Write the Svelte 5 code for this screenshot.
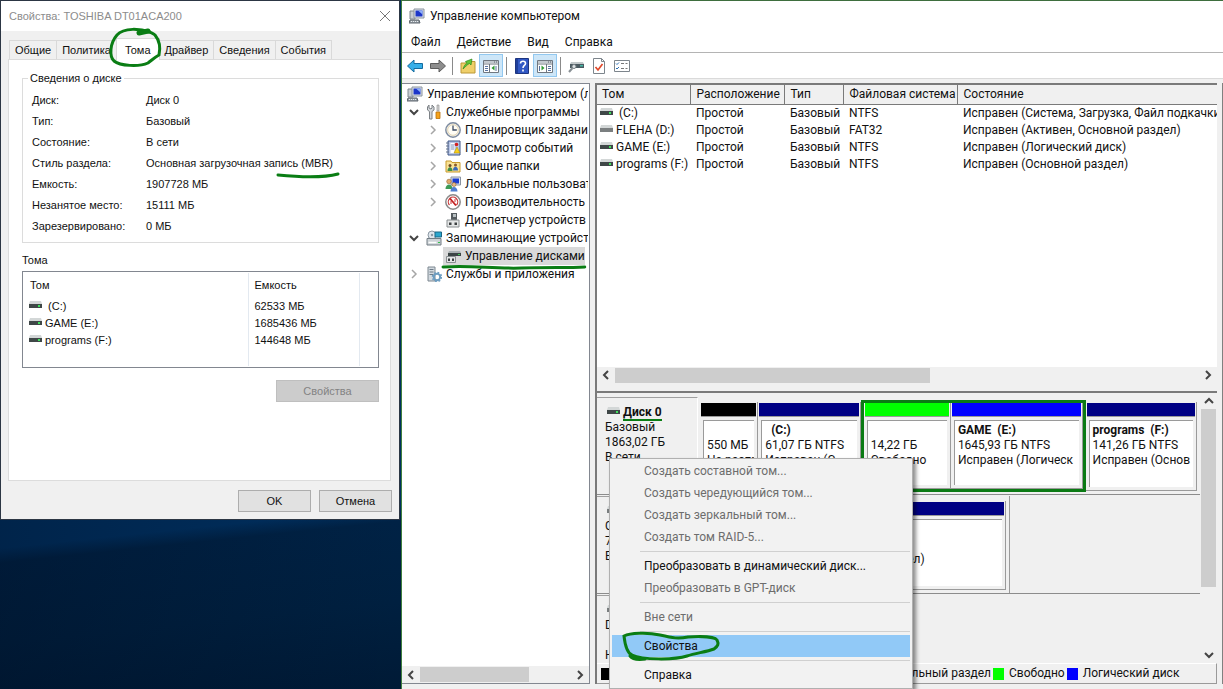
<script>
	let tabs = ['Общие', 'Политика', 'Тома', 'Драйвер', 'Сведения', 'События'];
	let activeTab = $state('Тома');

	let diskInfo = [
		['Диск:', 'Диск 0'],
		['Тип:', 'Базовый'],
		['Состояние:', 'В сети'],
		['Стиль раздела:', 'Основная загрузочная запись', '(MBR)'],
		['Емкость:', '1907728 МБ'],
		['Незанятое место:', '15111 МБ'],
		['Зарезервировано:', '0 МБ']
	];

	let diskVolumes = [
		{ name: '\u00a0(C:)', size: '62533 МБ' },
		{ name: 'GAME (E:)', size: '1685436 МБ' },
		{ name: 'programs (F:)', size: '144648 МБ' }
	];

	let menus = ['Файл', 'Действие', 'Вид', 'Справка'];

	let tree = [
		{
			label: 'Служебные программы',
			icon: 'tools',
			open: true,
			children: [
				{ label: 'Планировщик заданий', icon: 'clock', open: false },
				{ label: 'Просмотр событий', icon: 'events', open: false },
				{ label: 'Общие папки', icon: 'shared', open: false },
				{ label: 'Локальные пользователи', icon: 'users', open: false },
				{ label: 'Производительность', icon: 'gauge', open: false },
				{ label: 'Диспетчер устройств', icon: 'devices' }
			]
		},
		{
			label: 'Запоминающие устройства',
			icon: 'storage',
			open: true,
			children: [{ label: 'Управление дисками', icon: 'disks', selected: true }]
		},
		{ label: 'Службы и приложения', icon: 'services', open: false }
	];

	let volumes = [
		{ name: '\u00a0(C:)', fs: 'NTFS', status: 'Исправен (Система, Загрузка, Файл подкачки)' },
		{ name: 'FLEHA (D:)', fs: 'FAT32', status: 'Исправен (Активен, Основной раздел)', removable: true },
		{ name: 'GAME (E:)', fs: 'NTFS', status: 'Исправен (Логический диск)' },
		{ name: 'programs (F:)', fs: 'NTFS', status: 'Исправен (Основной раздел)' }
	];

	let legend = [
		{ label: 'Не распределена', kind: 'black' },
		{ label: 'Основной раздел', kind: 'navy' },
		{ label: 'Дополнительный раздел', kind: 'green' },
		{ label: 'Свободно', kind: 'lime' },
		{ label: 'Логический диск', kind: 'blue' }
	];

	let contextMenu = [
		[
			{ label: 'Создать составной том...', disabled: true },
			{ label: 'Создать чередующийся том...', disabled: true },
			{ label: 'Создать зеркальный том...', disabled: true },
			{ label: 'Создать том RAID-5...', disabled: true }
		],
		[
			{ label: 'Преобразовать в динамический диск...' },
			{ label: 'Преобразовать в GPT-диск', disabled: true }
		],
		[{ label: 'Вне сети', disabled: true }],
		[{ label: 'Свойства', current: true }],
		[{ label: 'Справка' }]
	];
</script>

{#snippet icon(name)}
	<svg class="icon" viewBox="0 0 16 16" aria-hidden="true">
		{#if name === 'computer'}
			<path d="M1 3h5v8H1z" fill="#c9ced3" stroke="#7d868e" />
			<path d="M5 1h10v9H5z" fill="#dfe3e8" stroke="#8a949e" />
			<path d="M6.500 2.500h7v6h-7z" fill="#1c36c9" />
			<path d="M9 2.500h4.500v4z" fill="#8fb0f7" />
			<path d="M1 12h9l1 3H0z" fill="#9aa2a9" stroke="#5f676e" />
			<path d="M2 13.500h7" stroke="#e8ecef" stroke-dasharray="1 1" />
		{:else if name === 'tools'}
			<path d="M3 1v3l2 1 1-1V1l2 2v3L6 7.500V15H3.500V7.500L1.500 6V3z" fill="#d5d8db" stroke="#7c8186" />
			<path d="M11 1h2v6h-2z" fill="#d6d6d6" stroke="#888" stroke-width=".6" />
			<path d="M10 8h4v6.500h-4z" fill="#f6a21a" stroke="#b8700a" stroke-width=".8" />
		{:else if name === 'clock'}
			<circle cx="8" cy="8" r="7.200" fill="#f3efe6" stroke="#7d8ba0" stroke-width="1.400" />
			<circle cx="8" cy="8" r="5.300" fill="#fffdf5" stroke="#d8c9a0" stroke-width=".7" />
			<path d="M8 3.500V8h3.800" fill="none" stroke="#3b4a63" stroke-width="1.300" />
		{:else if name === 'events'}
			<path d="M3 1h12v14H3z" fill="#b9c7e6" stroke="#3d5487" />
			<path d="M5.500 3h4v10h-4z" fill="#fff" />
			<path d="M6 5h3M6 7h3M6 9h3" stroke="#7a90bb" />
			<circle cx="11.500" cy="4.500" r="1.800" fill="#d32020" />
			<path d="M9 13l3-6 3 6z" fill="#f7d11b" stroke="#a98300" stroke-width=".5" />
			<path d="M1 3h3M1 6h3M1 9h3M1 12h3" stroke="#66748d" />
		{:else if name === 'shared'}
			<path d="M1 3h5l1 1.500h8V14H1z" fill="#f9e296" stroke="#c79a2c" />
			<circle cx="5" cy="7.500" r="1.500" fill="#6f4a24" />
			<path d="M2.500 13c0-5 5-5 5 0z" fill="#3f8f4a" />
			<circle cx="10.500" cy="7" r="1.500" fill="#8a5a2a" />
			<path d="M8 12.500c0-5 5-5 5 0z" fill="#3a69b8" />
		{:else if name === 'users'}
			<path d="M6 1h9.500v8H6z" fill="#dde3ea" stroke="#8993a0" />
			<path d="M7.500 2.500h6.500v5H7.500z" fill="#1b3dd1" />
			<circle cx="4" cy="5.500" r="2.300" fill="#e3ab6c" stroke="#94622d" stroke-width=".6" />
			<path d="M.5 13c0-6 7-6 7 0z" fill="#3f9b57" />
			<circle cx="9" cy="8.500" r="2" fill="#e9b983" stroke="#94622d" stroke-width=".6" />
			<path d="M5.500 15.500c0-6 7-6 7 0z" fill="#4e7ed0" />
		{:else if name === 'gauge'}
			<circle cx="8" cy="8" r="7.200" fill="#fff" stroke="#8a8a8a" stroke-width="1.500" />
			<path d="M4.500 11a4.700 4.700 0 1 1 7 0" fill="none" stroke="#c93a3a" stroke-width="1.200" />
			<path d="M5 4.500l6 7" stroke="#c41f1f" stroke-width="1.800" />
			<path d="M6 7v3M10 5v3" stroke="#c93a3a" />
		{:else if name === 'devices'}
			<path d="M6 1h6v7H6z" fill="#555c60" />
			<path d="M8 2h3v3H8z" fill="#b9c1c4" />
			<path d="M2 8h12v7H2z" fill="#e4e6e6" stroke="#898e90" />
			<path d="M4 10.500h2.500V13H4zM9.500 10.500H12V13H9.500z" fill="#3c4042" />
		{:else if name === 'storage'}
			<circle cx="6" cy="5" r="4" fill="#dfe6ec" stroke="#8b98a3" />
			<circle cx="6" cy="5" r="1.200" fill="#8b98a3" />
			<path d="M9 2h6.500v5H9z" fill="#2ba6cd" stroke="#1b6785" />
			<path d="M1 8.500h14V15H1z" fill="#cdd3d7" stroke="#737d84" />
			<path d="M2.500 12.500h8" stroke="#fff" stroke-width="1.500" />
			<path d="M12 12h2v1h-2z" fill="#35c24c" />
		{:else if name === 'disks'}
			<path d="M4 3h11l1 2H3z" fill="#a9b0b2" />
			<path d="M3 5h13v3H3z" fill="#3c4545" />
			<path d="M13 6h2v1h-2z" fill="#42d05a" />
			<path d="M1.500 8.500h9v6h-9z" fill="#e4e6e6" stroke="#898e90" />
			<path d="M3 10.500h2V13H3zM7 10.500h2V13H7z" fill="#3c4042" />
		{:else if name === 'services'}
			<path d="M2 1h7v14H2z" fill="#d3dae0" stroke="#7c8790" />
			<path d="M3.500 3.500h4M3.500 6h4M3.500 8.500h4" stroke="#6c7a87" />
			<circle cx="11" cy="11" r="3.200" fill="none" stroke="#6c9cc0" stroke-width="2" />
			<circle cx="11" cy="11" r="4.600" fill="none" stroke="#6c9cc0" stroke-width="1.400" stroke-dasharray="1.800 1.800" />
		{:else if name === 'back'}
			<path d="M.5 8L7 2v3.500h8.500v5H7V14z" fill="#35aee8" stroke="#146b9e" />
		{:else if name === 'forward'}
			<path d="M15.500 8L9 2v3.500H.5v5H9V14z" fill="#8d8d8d" stroke="#5c5c5c" />
		{:else if name === 'folder'}
			<path d="M1 5h5l1-1.500h8V15H1z" fill="#efcf6a" stroke="#bb9836" />
			<path d="M3 11c1-3 2-5 4-5.500L5.500 3.500 12 1l-1 6-1.500-1.500C7 6.500 6 8.500 3 11z" fill="#5fc43a" stroke="#2f8a1c" stroke-width=".7" />
		{:else if name === 'panel' || name === 'actions'}
			<path d="M.5 2.500h15v12H.5z" fill="#fff" stroke="#6f7780" />
			<path d="M1 3h14v2H1z" fill="#c3c9cf" />
			<path d="M11 4h1M13 4h1" stroke="#56606a" />
			<path d="M1 6h14" stroke="#6f7780" />
			{#if name === 'panel'}
				<path d="M6.500 6v8" stroke="#6f7780" />
				<path d="M2 8.500h3M2 10.500h3M2 12.500h3M13 8v5" stroke="#5873a1" />
				<path d="M11.500 7.500v5L8.500 10z" fill="#2e9a32" />
			{:else}
				<path d="M9.500 6v8" stroke="#6f7780" />
				<path d="M11 8.500h3M11 10.500h3M11 12.500h3M2.500 8v5" stroke="#5873a1" />
				<path d="M4.500 7.500v5l3-2.500z" fill="#2e9a32" />
			{/if}
		{:else if name === 'help'}
			<path d="M1.500.5h13v15h-13z" fill="#3158c4" stroke="#1d3580" />
			<path d="M2 1h2v14H2z" fill="#1f3f9b" />
			<path d="M6.500 5.500c0-3 5-3 5 0 0 2-2.500 2-2.500 4.500M9 11.500v2" fill="none" stroke="#fff" stroke-width="1.600" />
		{:else if name === 'connect'}
			<path d="M3 4h12l1 2H2z" fill="#c2c8ca" />
			<path d="M2 6h14v4H2z" fill="#4b5a61" />
			<path d="M12 7h3v1.500h-3z" fill="#46b9a5" />
			<circle cx="6" cy="8.500" r="2" fill="#dfe4e6" stroke="#777f84" />
			<path d="M4.500 10l-3.500 4" stroke="#888f94" stroke-width="2" />
		{:else if name === 'check'}
			<path d="M2.500.5h8l3 3v12h-11z" fill="#fff" stroke="#7d858c" />
			<path d="M10.500.5v3h3" fill="none" stroke="#7d858c" />
			<path d="M4.500 9l2.500 3 4.500-6" fill="none" stroke="#e0482a" stroke-width="1.700" />
		{:else if name === 'list'}
			<path d="M.5 2.500h15v11H.5z" fill="#fff" stroke="#7d858c" />
			<path d="M2 5.500l1 1L5 4.500M2 10l1 1 2-2" fill="none" stroke="#2b6fb5" />
			<path d="M7 5.500h3M11.500 5.500h2M7 10.500h3M11.500 10.500h2" stroke="#777" />
		{/if}
	</svg>
{/snippet}

{#snippet drive(removable = false)}
	<svg class="drive" viewBox="0 0 13 8" aria-hidden="true">
		<path d="M1 0h11l1 3H0z" fill="#d3d7d7" />
		<path d="M0 3h13v4H0z" fill={removable ? '#7b7f80' : '#3f4747'} />
		{#if !removable}
			<path d="M9 4h2v2H9z" fill="#3fe05c" />
		{/if}
	</svg>
{/snippet}

{#snippet chevron(dir)}
	<svg class="chevron {dir}" viewBox="0 0 10 10" aria-hidden="true">
		<path d="M3 1l4 4-4 4" />
	</svg>
{/snippet}

{#snippet branch(nodes)}
	<ul>
		{#each nodes as node}
			<li>
				<div class="node">
					<span class="toggle" class:collapsed={!node.open}>
						{#if node.open !== undefined}
							{@render chevron(node.open ? 'down' : 'right')}
						{/if}
					</span>
					<button class="node-label" class:selected={node.selected}>
						{@render icon(node.icon)}{node.label}
						{#if node.selected}
							<svg class="mark under-node" viewBox="0 0 144 6" preserveAspectRatio="none" aria-hidden="true">
								<path d="M0 3c30-2 50 2 80 1s45 0 64-1" />
							</svg>
						{/if}
					</button>
				</div>
				{#if node.children && node.open}
					{@render branch(node.children)}
				{/if}
			</li>
		{/each}
	</ul>
{/snippet}

{#snippet partition(kind, size, title, lines)}
	<div class="partition {size}">
		<div class="stripe {kind}"></div>
		<div class="partition-body">
			<strong>{title}</strong>
			{#each lines as line}
				<span>{line}</span>
			{/each}
		</div>
	</div>
{/snippet}

<div class="desktop">
	<div class="left-side">
		<section class="dialog">
			<header class="dialog-title">
				<span>Свойства: TOSHIBA DT01ACA200</span>
				<button class="close" aria-label="Закрыть">
					<svg viewBox="0 0 10 10"><path d="M0 0l10 10M10 0L0 10" /></svg>
				</button>
			</header>
			<div class="tabs" role="tablist">
				{#each tabs as tab}
					<button
						class="tab"
						class:active={tab === activeTab}
						role="tab"
						aria-selected={tab === activeTab}
						onclick={() => (activeTab = tab)}
					>
						{tab}
						{#if tab === 'Тома'}
							<svg class="mark ring" viewBox="0 0 52 40" aria-hidden="true">
								<path d="M41 4C32 1 15-1 8 7 1 15 0 28 5 33c6 5 25 6 34 2 4-3 7-6 11-8 2-9 0-15-4-20-3-3-7-4-13-3" />
								<path d="M30 5l9-2" stroke-width="5" />
							</svg>
						{/if}
					</button>
				{/each}
			</div>
			<div class="tab-panel">
				<fieldset>
					<legend>Сведения о диске</legend>
					<dl>
						{#each diskInfo as [label, value, marked]}
							<dt>{label}</dt>
							<dd>
								{value}
								{#if marked}
									<span class="marked">
										{marked}
										<svg class="mark under-mbr" viewBox="0 0 62 6" aria-hidden="true">
											<path d="M1 3c20 2 45 3 60-1" />
										</svg>
									</span>
								{/if}
							</dd>
						{/each}
					</dl>
				</fieldset>
				<h2>Тома</h2>
				<div class="volume-list">
					<table>
						<thead>
							<tr><th>Том</th><th>Емкость</th><th class="rest" aria-label="Пусто"></th></tr>
						</thead>
						<tbody>
							{#each diskVolumes as volume}
								<tr>
									<td>{@render drive()}{volume.name}</td>
									<td>{volume.size}</td>
									<td></td>
								</tr>
							{/each}
							<tr class="filler"><td></td><td></td><td></td></tr>
						</tbody>
					</table>
				</div>
				<button class="push wide" disabled>Свойства</button>
			</div>
			<footer>
				<button class="push">OK</button>
				<button class="push">Отмена</button>
			</footer>
		</section>
	</div>

	<section class="console">
		<header class="console-title">
			{@render icon('computer')}
			<span>Управление компьютером</span>
		</header>
		<nav class="menubar">
			{#each menus as item}
				<button>{item}</button>
			{/each}
		</nav>
		<div class="toolbar">
			<button aria-label="Назад">{@render icon('back')}</button>
			<button aria-label="Вперед">{@render icon('forward')}</button>
			<i></i>
			<button aria-label="Вверх">{@render icon('folder')}</button>
			<button aria-label="Дерево консоли" class="on">{@render icon('panel')}</button>
			<i></i>
			<button aria-label="Справка">{@render icon('help')}</button>
			<button aria-label="Панель действий" class="on">{@render icon('actions')}</button>
			<i></i>
			<button aria-label="Подключить">{@render icon('connect')}</button>
			<button aria-label="Проверить">{@render icon('check')}</button>
			<button aria-label="Параметры">{@render icon('list')}</button>
		</div>

		<div class="workspace">
			<aside class="tree">
				<div class="tree-body">
					<button class="node-label root">{@render icon('computer')}Управление компьютером (локальным)</button>
					{@render branch(tree)}
				</div>
				<div class="hscroll">
					<button aria-label="Влево">{@render chevron('left')}</button>
					<div class="track"><div class="thumb tree-thumb"></div></div>
					<button aria-label="Вправо">{@render chevron('right')}</button>
				</div>
			</aside>

			<main>
				<div class="volumes">
					<div class="volumes-body">
						<table>
							<thead>
								<tr>
									<th>Том</th>
									<th>Расположение</th>
									<th>Тип</th>
									<th>Файловая система</th>
									<th>Состояние</th>
								</tr>
							</thead>
							<tbody>
								{#each volumes as volume}
									<tr>
										<td>{@render drive(volume.removable)}{volume.name}</td>
										<td>Простой</td>
										<td>Базовый</td>
										<td>{volume.fs}</td>
										<td>{volume.status}</td>
									</tr>
								{/each}
							</tbody>
						</table>
					</div>
					<div class="hscroll">
						<button aria-label="Влево">{@render chevron('left')}</button>
						<div class="track"><div class="thumb"></div></div>
						<button aria-label="Вправо">{@render chevron('right')}</button>
					</div>
				</div>

				<div class="graph">
					<div class="disk-view">
						<div class="disks">
							<div class="disk">
								<div class="disk-label">
									<strong>{@render drive()}<span class="marked">Диск 0</span></strong>
									<span>Базовый</span>
									<span>1863,02 ГБ</span>
									<span>В сети</span>
								</div>
								<div class="partitions">
									{@render partition('black', 'tiny', '', ['550 МБ', 'Не распр'])}
									{@render partition('navy', 'small', '\u00a0 (C:)', ['61,07 ГБ NTFS', 'Исправен (С'])}
									<div class="extended">
										{@render partition('lime', 'free', '', ['14,22 ГБ', 'Свободно'])}
										{@render partition('blue', 'large', 'GAME \u00a0(E:)', ['1645,93 ГБ NTFS', 'Исправен (Логическ'])}
									</div>
									{@render partition('navy', 'medium', 'programs \u00a0(F:)', ['141,26 ГБ NTFS', 'Исправен (Основ'])}
								</div>
							</div>
							<div class="disk second">
								<div class="disk-label">
									<strong>{@render drive(true)}<span>Диск 1</span></strong>
									<span>Съемное</span>
									<span>7,45 ГБ</span>
									<span>В сети</span>
								</div>
								<div class="partitions">
									{@render partition('navy', 'flash', 'FLEHA \u00a0(D:)', ['7,45 ГБ FAT32', 'Исправен (Активен, Основной раздел)'])}
								</div>
							</div>
							<div class="disk">
								<div class="disk-label">
									<strong>{@render drive(true)}<span>CD-ROM 0</span></strong>
									<span>DVD (G:)</span>
									<span>&nbsp;</span>
									<span>Нет носителя</span>
								</div>
							</div>
						</div>
						<div class="vscroll">
							<button aria-label="Вверх">{@render chevron('up')}</button>
							<div class="track"><div class="thumb"></div></div>
							<button aria-label="Вниз">{@render chevron('down')}</button>
						</div>
					</div>
					<ul class="legend">
						{#each legend as item}
							<li><span class="swatch {item.kind}"></span>{item.label}</li>
						{/each}
					</ul>

					<div class="context-menu" role="menu">
						{#each contextMenu as group}
							<div class="group">
								{#each group as item}
									<button role="menuitem" class:current={item.current} disabled={item.disabled}>
										{item.label}
										{#if item.current}
											<svg class="mark loop" viewBox="0 0 100 32" aria-hidden="true">
												<path d="M2 5C8 2 25 1 38 4s18 4 28 2c14-1 27 0 29 3 2 4 1 6-3 9-8 3-18 4-27 7-12 4-45 4-55-1C5 22 3 14 2 5zM8 25c3 4 8 4 15 3" />
											</svg>
										{/if}
									</button>
								{/each}
							</div>
						{/each}
					</div>
				</div>
			</main>
			<div class="edge"></div>
		</div>
	</section>
</div>

<style>
	:global(body) {
		margin: 0;
	}
	* {
		box-sizing: border-box;
	}
	button {
		font: inherit;
		color: inherit;
		background: none;
		border: none;
		padding: 0;
		margin: 0;
	}
	ul,
	dl,
	dd,
	h2 {
		list-style: none;
		margin: 0;
		padding: 0;
		font-weight: normal;
	}
	table {
		border-collapse: collapse;
		table-layout: fixed;
	}
	th,
	td {
		padding: 0;
		text-align: left;
		font-weight: normal;
		white-space: nowrap;
	}

	.desktop {
		display: grid;
		grid-template-columns: minmax(0, 401fr) minmax(0, 822fr);
		height: 100vh;
		overflow: hidden;
		color: #111;
		font-family: Roboto, 'Open Sans', sans-serif;
		font-size: 12px;
		line-height: 16px;
	}
	.left-side {
		background:
			linear-gradient(to right, rgba(0, 8, 24, 0.3), rgba(0, 8, 24, 0)),
			linear-gradient(174deg, #003060 75%, #002245 77%, #002040 88%, #001a36 100%);
	}
	.icon {
		width: 16px;
		height: 16px;
		flex: none;
	}
	.drive {
		width: 13px;
		height: 8px;
		flex: none;
		margin-right: 3px;
		vertical-align: 1px;
	}
	.chevron {
		width: 10px;
		height: 10px;
		fill: none;
		stroke: #444;
		stroke-width: 2;
	}
	.chevron.left {
		transform: rotate(180deg);
	}
	.chevron.down {
		transform: rotate(90deg);
	}
	.chevron.up {
		transform: rotate(-90deg);
	}

	/* hand-drawn green marks */
	.mark {
		position: absolute;
		fill: none;
		stroke: #0a7d14;
		stroke-width: 3;
		stroke-linecap: round;
		overflow: visible;
		pointer-events: none;
	}
	.marked {
		position: relative;
	}
	.ring {
		width: 52px;
		height: 40px;
		left: -8px;
		top: -11px;
		z-index: 2;
	}
	.under-mbr {
		width: 62px;
		height: 6px;
		right: -6px;
		top: 15px;
	}
	.under-node {
		left: 0;
		width: 100%;
		height: 6px;
		bottom: -5px;
		z-index: 1;
	}
	.loop {
		width: 100px;
		height: 32px;
		left: 10px;
		top: -4px;
	}

	/* properties dialog */
	.dialog {
		margin-right: 1px;
		border: 1px solid #2c3644;
		background: #f0f0f0;
		font-family: 'Liberation Sans', Arial, sans-serif;
		font-size: 11px;
	}
	.dialog-title {
		display: flex;
		justify-content: space-between;
		align-items: center;
		height: 30px;
		padding: 0 9px 0 8px;
		background: #fff;
		color: #8c8c8c;
	}
	.close svg {
		display: block;
		width: 10px;
		height: 10px;
		fill: none;
		stroke: #777;
		overflow: visible;
	}
	.tabs {
		display: flex;
		align-items: flex-end;
		height: 28px;
		padding-left: 8px;
	}
	.tab {
		position: relative;
		height: 19px;
		padding: 0 5px;
		border: 1px solid #d9d9d9;
		border-bottom: none;
		margin-right: -1px;
	}
	.tab.active {
		height: 22px;
		margin-bottom: -1px;
		padding: 0 8px;
		background: #fff;
		z-index: 1;
	}
	.tab-panel {
		margin: 0 8px 0 7px;
		padding: 11px 11px 78px 13px;
		border: 1px solid #dcdcdc;
		background: #fff;
	}
	fieldset {
		margin: 0;
		padding: 5px 9px;
		border: 1px solid #dcdcdc;
		min-width: 0;
	}
	.tab-panel legend {
		padding: 0 2px;
		line-height: 14px;
		margin-left: -4px;
	}
	dl {
		display: grid;
		grid-template-columns: 114px 1fr;
		line-height: 21px;
	}
	h2 {
		margin: 9px 0 3px;
		font-size: 11px;
		line-height: 16px;
	}
	.volume-list {
		border: 1px solid #828790;
		padding: 1px 0;
	}
	.volume-list table {
		width: 100%;
	}
	.volume-list th,
	.volume-list td {
		height: 17px;
		padding-left: 6px;
		border-right: 1px solid #e3e9f0;
	}
	.volume-list th {
		height: 24px;
	}
	.volume-list th:first-child {
		width: 225px;
		padding-left: 7px;
	}
	.volume-list .rest {
		width: 19px;
	}
	.volume-list tr > :last-child {
		border-right: none;
	}
	.volume-list .filler td {
		height: 18px;
	}
	.push {
		width: 73px;
		height: 22px;
		border: 1px solid #adadad;
		background: #e1e1e1;
	}
	.push.wide {
		display: block;
		width: 103px;
		margin: 12px 0 0 auto;
	}
	.push:disabled {
		background: #ccc;
		border-color: #bfbfbf;
		color: #838383;
	}
	footer {
		display: flex;
		justify-content: flex-end;
		gap: 8px;
		padding: 9px 7px 7px;
	}

	/* management console */
	.console {
		display: flex;
		flex-direction: column;
		min-height: 0;
		border-top: 1px solid #3e6e3e;
		border-left: 1px solid #3e7e3e;
		background: #f0f0f0;
	}
	.console-title {
		display: flex;
		align-items: center;
		gap: 5px;
		height: 30px;
		padding-left: 7px;
		background: #fff;
	}
	.menubar {
		display: flex;
		gap: 16px;
		height: 22px;
		padding-left: 9px;
		background: #fff;
		border-bottom: 1px solid #b4b4b4;
	}
	.toolbar {
		display: flex;
		align-items: center;
		height: 26px;
		padding-left: 1px;
		background: #fff;
		border-bottom: 1px solid #dadada;
	}
	.toolbar button {
		display: grid;
		place-items: center;
		width: 23px;
		height: 23px;
	}
	.toolbar .on {
		width: 24px;
		background: #cde6f8;
		border: 1px solid #92c8f0;
	}
	.toolbar i {
		width: 1px;
		height: 18px;
		margin: 0 3px;
		background: #8a8a8a;
	}
	.workspace {
		display: flex;
		flex: 1;
		min-height: 0;
		gap: 5px;
		padding: 4px 0 5px;
	}
	.tree {
		display: flex;
		flex-direction: column;
		flex: 0 0 188px;
		min-width: 0;
		border: 1px solid #828790;
		border-left-width: 0;
		background: #fff;
	}
	.tree-body {
		flex: 1;
		min-height: 0;
		margin-right: 1px;
		padding: 1px 0 0 4px;
		overflow: hidden;
		white-space: nowrap;
	}
	.tree ul ul {
		padding-left: 19px;
	}
	.node {
		display: flex;
		align-items: center;
		gap: 2px;
		height: 18px;
	}
	.toggle {
		display: grid;
		place-items: center;
		width: 16px;
		flex: none;
	}
	.collapsed .chevron {
		stroke: #a6a6a6;
		stroke-width: 1.500;
	}
	.node-label {
		position: relative;
		display: flex;
		align-items: center;
		gap: 4px;
		height: 18px;
		padding-left: 2px;
		white-space: nowrap;
	}
	.node-label.root {
		padding-left: 1px;
	}
	.node-label.selected {
		background: #d9d9d9;
	}
	.hscroll {
		display: flex;
		flex: none;
		height: 17px;
		background: #f0f0f0;
	}
	.hscroll button {
		display: grid;
		place-items: center;
		width: 18px;
	}
	.track {
		flex: 1;
	}
	.thumb {
		background: #cdcdcd;
	}
	.hscroll .thumb {
		width: 54%;
		height: 15px;
		margin-top: 1px;
	}
	.hscroll .tree-thumb {
		width: 72%;
	}

	main {
		display: flex;
		flex-direction: column;
		flex: 1;
		min-width: 0;
		border-left: 2px solid #7a7a7a;
	}
	.volumes {
		display: flex;
		flex-direction: column;
		flex: 308 1 0;
		min-height: 0;
		border-top: 2px solid #7a7a7a;
		border-bottom: 2px solid #7a7a7a;
		padding-bottom: 7px;
	}
	.volumes-body {
		flex: 1;
		min-height: 0;
		overflow: hidden;
		background: #fff;
	}
	.volumes table {
		width: 100%;
		min-width: 540px;
	}
	.volumes th {
		width: 94px;
		height: 19px;
		padding-left: 6px;
		background: #f0f0f0;
		border-right: 1px solid #7a7a7a;
		border-bottom: 1px solid #7a7a7a;
	}
	.volumes th:first-child {
		width: 93px;
		padding-left: 5px;
	}
	.volumes th:nth-child(3) {
		width: 59px;
	}
	.volumes th:nth-child(4) {
		width: 114px;
	}
	.volumes th:last-child {
		width: auto;
		border-right: none;
	}
	.volumes td {
		height: 17px;
		padding-left: 6px;
		overflow: hidden;
	}
	.volumes td:first-child {
		padding-left: 3px;
	}

	.graph {
		position: relative;
		display: flex;
		flex-direction: column;
		flex: 300 1 0;
		min-height: 0;
	}
	.disk-view {
		display: flex;
		flex: 1;
		min-height: 0;
	}
	.disks {
		flex: 1;
		min-width: 0;
		padding-top: 4px;
		overflow: hidden;
	}
	.disk {
		display: flex;
		gap: 2px;
		height: 98px;
		border-bottom: 1px solid #8c8c8c;
		margin-bottom: 1px;
	}
	.disk-label {
		display: flex;
		flex-direction: column;
		flex: 0 0 101px;
		padding: 7px 0 0 8px;
		border-top: 1px solid #a0a0a0;
		border-right: 1px solid #fff;
		line-height: 15px;
	}
	.disk-label .marked {
		border-bottom: 2px solid #0a7d14;
		line-height: 14px;
	}
	.disk-label strong {
		padding-left: 2px;
	}
	.partitions {
		display: flex;
		flex: 1;
		min-width: 0;
		padding: 5px 3px 3px 0;
	}
	.partition {
		display: flex;
		flex-direction: column;
		min-width: 0;
		border-right: 1px solid #9a9a9a;
		border-bottom: 1px solid #9a9a9a;
	}
	.tiny {
		flex: 58 1 0;
	}
	.small {
		flex: 103 1 0;
	}
	.free {
		flex: 85 1 0;
	}
	.large {
		flex: 129 1 0;
	}
	.medium {
		flex: 112 1 0;
	}
	.extended {
		display: flex;
		flex: 222 1 0;
		min-width: 0;
		margin: -2px 0 -1px;
		border: 3px solid #0b7a14;
	}
	.stripe {
		height: 14px;
		margin: 1px 1px 0;
		border-bottom: 1px solid #9a9a9a;
	}
	.extended .stripe {
		margin-top: 0;
	}
	.partition-body {
		display: flex;
		flex-direction: column;
		flex: 1;
		margin: 3px 3px 3px 3px;
		padding-left: 3px;
		border-top: 1px solid #9a9a9a;
		border-left: 1px solid #9a9a9a;
		background: #fff;
		line-height: 15px;
		white-space: nowrap;
		overflow: hidden;
	}
	.partition-body strong {
		height: 17px;
		line-height: 19px;
	}
	.second .partitions {
		flex: 0 0 310px;
		border-right: 1px solid #9a9a9a;
	}
	.flash {
		flex: 1;
	}
	.black {
		background: #000;
	}
	.navy {
		background: #000084;
	}
	.green {
		background: #008000;
	}
	.lime {
		background: #00ff00;
	}
	.blue {
		background: #0000ff;
	}
	.vscroll {
		display: flex;
		flex-direction: column;
		flex: none;
		width: 17px;
	}
	.vscroll button {
		display: grid;
		place-items: center;
		height: 16px;
	}
	.vscroll .thumb {
		width: 15px;
		height: 75%;
		margin-left: 1px;
	}
	.legend {
		display: flex;
		gap: 2px;
		flex: none;
		height: 21px;
		padding-left: 4px;
		border: 1px solid #9a9a9a;
		border-width: 0 1px 1px 0;
		border-top: 1px solid #fff;
		line-height: 19px;
		white-space: nowrap;
		overflow: hidden;
	}
	.legend li {
		display: flex;
		align-items: center;
		gap: 5px;
	}
	.swatch {
		width: 11px;
		height: 12px;
	}

	.context-menu {
		position: absolute;
		left: 12px;
		top: 65px;
		z-index: 5;
		width: 304px;
		padding: 1px 2px 2px;
		border: 1px solid #b0b0b0;
		background: #f2f2f2;
		box-shadow: 3px 3px 4px rgba(0, 0, 0, 0.45);
	}
	.group + .group {
		margin-top: 3px;
		padding-top: 4px;
		background: linear-gradient(#d0d0d0, #d0d0d0) 28px 0 / 100% 1px no-repeat;
	}
	.context-menu button {
		position: relative;
		display: block;
		width: 100%;
		height: 22px;
		padding-left: 32px;
		text-align: left;
	}
	.context-menu button:disabled {
		color: #6d6d6d;
	}
	.context-menu .current {
		background: #91c9f7;
	}
	.edge {
		width: 1px;
		background: #808080;
	}
</style>
